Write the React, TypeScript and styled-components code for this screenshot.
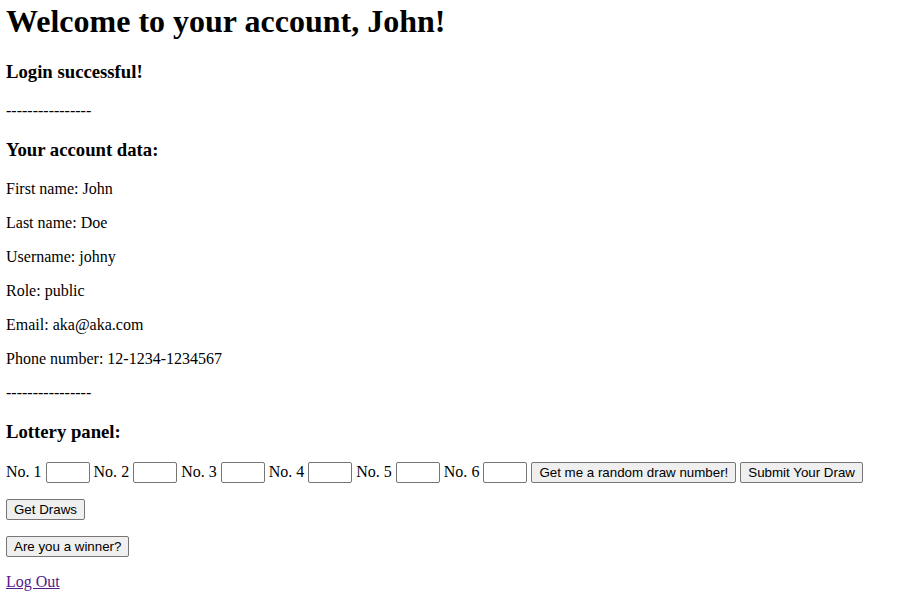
import * as React from 'react'
import styled, { createGlobalStyle } from 'styled-components';

const GlobalStyle = createGlobalStyle`
    html, body {
        margin:0;
        padding:0;
        background:#fff;
    }
    body {
        font-family:"Liberation Serif", "Times New Roman", serif;
        font-size:16px;
        color:#000;
    }
`

const FIELDS = [
    { label: 'First name', value: 'John' },
    { label: 'Last name', value: 'Doe' },
    { label: 'Username', value: 'johny' },
    { label: 'Role', value: 'public' },
    { label: 'Email', value: 'aka@aka.com' },
    { label: 'Phone number', value: '12-1234-1234567' },
]

export default function App() {
    return (
        <Page>
            <GlobalStyle />
            <Title>Welcome to your account, John!</Title>
            <SubTitle>Login successful!</SubTitle>
            <Text>----------------</Text>
            <SubTitle>Your account data:</SubTitle>
            {FIELDS.map(f => (
                <Text key={f.label}>{f.label}: {f.value}</Text>
            ))}
            <Text>----------------</Text>
            <SubTitle>Lottery panel:</SubTitle>
            <Text>
                {[1, 2, 3, 4, 5, 6].map(n => (
                    <React.Fragment key={n}>
                        No. {n} <NumberInput type="text" />{' '}
                    </React.Fragment>
                ))}
                <Button>Get me a random draw number!</Button>{' '}
                <Button>Submit Your Draw</Button>
            </Text>
            <Text>
                <Button>Get Draws</Button>
            </Text>
            <Text>
                <Button>Are you a winner?</Button>
            </Text>
            <Text>
                <LogOut href="#">Log Out</LogOut>
            </Text>
        </Page>
    )
}

const Page = styled.div`
    padding:3px 6px 0;
`

const Title = styled.h1`
    font-size:32px;
    font-weight:bold;
    margin:0 0 21px;
`

const SubTitle = styled.h3`
    font-size:18.72px;
    font-weight:bold;
    margin:19px 0;
`

const Text = styled.p`
    margin:16px 0;
`

const NumberInput = styled.input`
    box-sizing:border-box;
    width:44px;
    height:21px;
    padding:1px 2px;
    border:1px solid #767676;
    border-radius:2px;
    background:#fff;
    font-family:"Liberation Sans", Arial, sans-serif;
    font-size:13.33px;
    vertical-align:baseline;
`

const Button = styled.button`
    box-sizing:border-box;
    height:21px;
    padding:1px 7px;
    border:1px solid #767676;
    border-radius:2px;
    background:#efefef;
    color:#000;
    font-family:"Liberation Sans", Arial, sans-serif;
    font-size:13.33px;
`

const LogOut = styled.a`
    color:#551a8b;
    text-decoration:underline;
`
